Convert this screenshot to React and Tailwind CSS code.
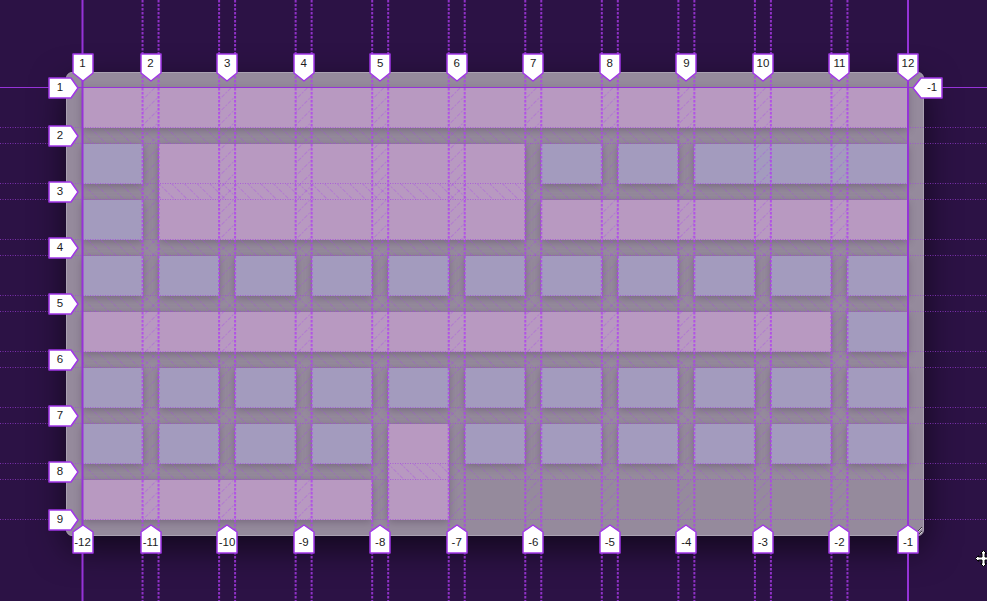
import React from 'react';

// grid geometry, kept in step with the container classes below
const GX = 82;
const GY = 88;
const GW = 826;
const GH = 432;
const GAP = 16;
const ROW = 40;
const COLS = 11;
const ROWS = 8;
const COL = (GW - GAP * (COLS - 1)) / COLS;

const colStarts = Array.from({ length: COLS }, (_, i) => GX + i * (COL + GAP));
const rowStarts = Array.from({ length: ROWS }, (_, i) => GY + i * (ROW + GAP));

const colLine = (k) => (k === 1 ? GX + 0.5 : k === COLS + 1 ? GX + GW : colStarts[k - 1] - GAP / 2);
const rowLine = (k) => (k === 1 ? GY - 0.5 : k === ROWS + 1 ? GY + GH - 0.5 : rowStarts[k - 1] - GAP / 2);

const PINK = 'bg-[#b899c1]';
const BLUE = 'bg-[#a39bbe]';

const items = [
  { c: 'col-span-11', bg: PINK },
  { c: '', bg: BLUE },
  { c: 'col-span-5 row-span-2', bg: PINK },
  { c: '', bg: BLUE },
  { c: '', bg: BLUE },
  { c: 'col-span-3', bg: BLUE },
  { c: '', bg: BLUE },
  { c: 'col-span-5', bg: PINK },
  ...Array.from({ length: 11 }, () => ({ c: '', bg: BLUE })),
  { c: 'col-span-10', bg: PINK },
  { c: '', bg: BLUE },
  ...Array.from({ length: 11 }, () => ({ c: '', bg: BLUE })),
  ...Array.from({ length: 4 }, () => ({ c: '', bg: BLUE })),
  { c: 'row-span-2', bg: PINK },
  ...Array.from({ length: 6 }, () => ({ c: '', bg: BLUE })),
  { c: 'col-span-4', bg: PINK },
];

const Label = ({ dir, x, y, text }) => {
  // x,y is the arrow tip
  let box, svg, pts;
  if (dir === 'down') {
    svg = { left: x - 11, top: y - 28, width: 22, height: 30 };
    pts = '1,1 21,1 21,20 11,28 1,20';
    box = { left: x - 10, top: y - 27, width: 20, height: 19 };
  } else if (dir === 'up') {
    svg = { left: x - 11, top: y - 1, width: 22, height: 31 };
    pts = '11,1 21,8 21,29 1,29 1,8';
    box = { left: x - 10, top: y + 7, width: 20, height: 21 };
  } else if (dir === 'right') {
    svg = { left: x - 30, top: y - 11, width: 31, height: 22 };
    pts = '1,1 23,1 30,11 23,21 1,21';
    box = { left: x - 29, top: y - 10, width: 22, height: 20 };
  } else {
    svg = { left: x - 1, top: y - 11, width: 31, height: 22 };
    pts = '1,11 9,1 30,1 30,21 9,21';
    box = { left: x + 8, top: y - 10, width: 22, height: 20 };
  }
  return (
    <>
      <svg className="absolute" style={svg} width={svg.width} height={svg.height}>
        <polygon points={pts} fill="#ffffff" stroke="#a036e6" strokeWidth="1.5" strokeLinejoin="round" />
      </svg>
      <div className="absolute flex items-center justify-center text-[11.5px] leading-none text-[#1c1c1c]" style={box}>
        {text}
      </div>
    </>
  );
};

export default function App() {
  const colGaps = colStarts.slice(1).map((s) => [s - GAP, s]);
  const rowGaps = rowStarts.slice(1).map((s) => [s - GAP, s]);

  return (
    <div className="relative h-[601px] w-full overflow-hidden bg-[#2c1245] pl-[66px] pt-[72px] font-['Liberation_Sans',Arial,sans-serif]">
      {/* the grid container being inspected */}
      <div className="h-[464px] w-[858px] resize overflow-hidden rounded-md border border-[#aaa2b2] bg-[#958a9c] p-[15px] shadow-[0_12px_34px_rgba(0,0,0,0.6)]">
        <div className="grid h-full grid-cols-11 grid-rows-[repeat(8,40px)] gap-4">
          {items.map((it, i) => (
            <div key={i} className={`${it.c} ${it.bg} shadow-[0_2px_8px_rgba(30,10,40,0.26)]`} />
          ))}
        </div>
      </div>

      {/* grid inspector overlay */}
      <svg className="pointer-events-none absolute left-0 top-0" width="987" height="601">
        <defs>
          <pattern id="hatchCol" width="9" height="9" patternUnits="userSpaceOnUse" patternTransform="rotate(45)">
            <line x1="0" y1="0" x2="0" y2="9" stroke="#a83ff0" strokeWidth="1" strokeDasharray="2 1.5" opacity="0.7" />
          </pattern>
          <pattern id="hatchRow" width="9" height="9" patternUnits="userSpaceOnUse" patternTransform="rotate(-45)">
            <line x1="0" y1="0" x2="0" y2="9" stroke="#a83ff0" strokeWidth="1" strokeDasharray="2 1.5" opacity="0.7" />
          </pattern>
        </defs>

        {colGaps.map(([a, b], i) => (
          <rect key={'cg' + i} x={a} y={GY} width={b - a} height={GH} fill="url(#hatchCol)" />
        ))}
        {rowGaps.map(([a, b], i) => (
          <rect key={'rg' + i} x={GX} y={a} width={GW} height={b - a} fill="url(#hatchRow)" />
        ))}

        {/* horizontal lines */}
        <line x1="0" y1={GY - 0.5} x2="987" y2={GY - 0.5} stroke="#9633d8" strokeWidth="1" />
        {rowGaps.flat().map((y, i) => (
          <line key={'h' + i} x1="0" y1={y - 0.5} x2="987" y2={y - 0.5} stroke="#a33fe2" strokeWidth="1" strokeDasharray="1 1.5" opacity="0.65" />
        ))}
        <line x1="0" y1={GY + GH - 0.5} x2="987" y2={GY + GH - 0.5} stroke="#a33fe2" strokeWidth="1" strokeDasharray="1 1.5" opacity="0.65" />

        {/* vertical lines */}
        <line x1={GX + 0.5} y1="0" x2={GX + 0.5} y2="601" stroke="#9633d8" strokeWidth="2" />
        <line x1={GX + GW} y1="0" x2={GX + GW} y2="601" stroke="#9633d8" strokeWidth="2" />
        {colGaps.flat().map((x, i) => (
          <line key={'v' + i} x1={x} y1="0" x2={x} y2="601" stroke="#b03cf2" strokeWidth="2" strokeDasharray="2.5 1.5" opacity="0.75" />
        ))}

        {/* mouse pointer */}
        <g transform="translate(976.5 550.5)">
          <path
            d="M7 0 L10 3 H8.5 V6.5 H12 V5 L15 8 L12 11 V9.5 H8.5 V13 H10 L7 16 L4 13 H5.5 V9.5 H2 V11 L-1 8 L2 5 V6.5 H5.5 V3 H4 Z"
            fill="#ffffff"
            stroke="#000000"
            strokeWidth="1"
            strokeLinejoin="miter"
          />
        </g>
      </svg>

      {/* line number labels */}
      <div className="pointer-events-none absolute inset-0">
        {Array.from({ length: COLS + 1 }, (_, i) => (
          <Label key={'t' + i} dir="down" x={colLine(i + 1)} y={81} text={String(i + 1)} />
        ))}
        {Array.from({ length: COLS + 1 }, (_, i) => (
          <Label key={'b' + i} dir="up" x={colLine(i + 1)} y={525} text={String(i - COLS - 1)} />
        ))}
        {Array.from({ length: ROWS + 1 }, (_, i) => (
          <Label key={'l' + i} dir="right" x={78} y={rowLine(i + 1)} text={String(i + 1)} />
        ))}
        <Label dir="left" x={913} y={rowLine(1)} text="-1" />
      </div>
    </div>
  );
}
